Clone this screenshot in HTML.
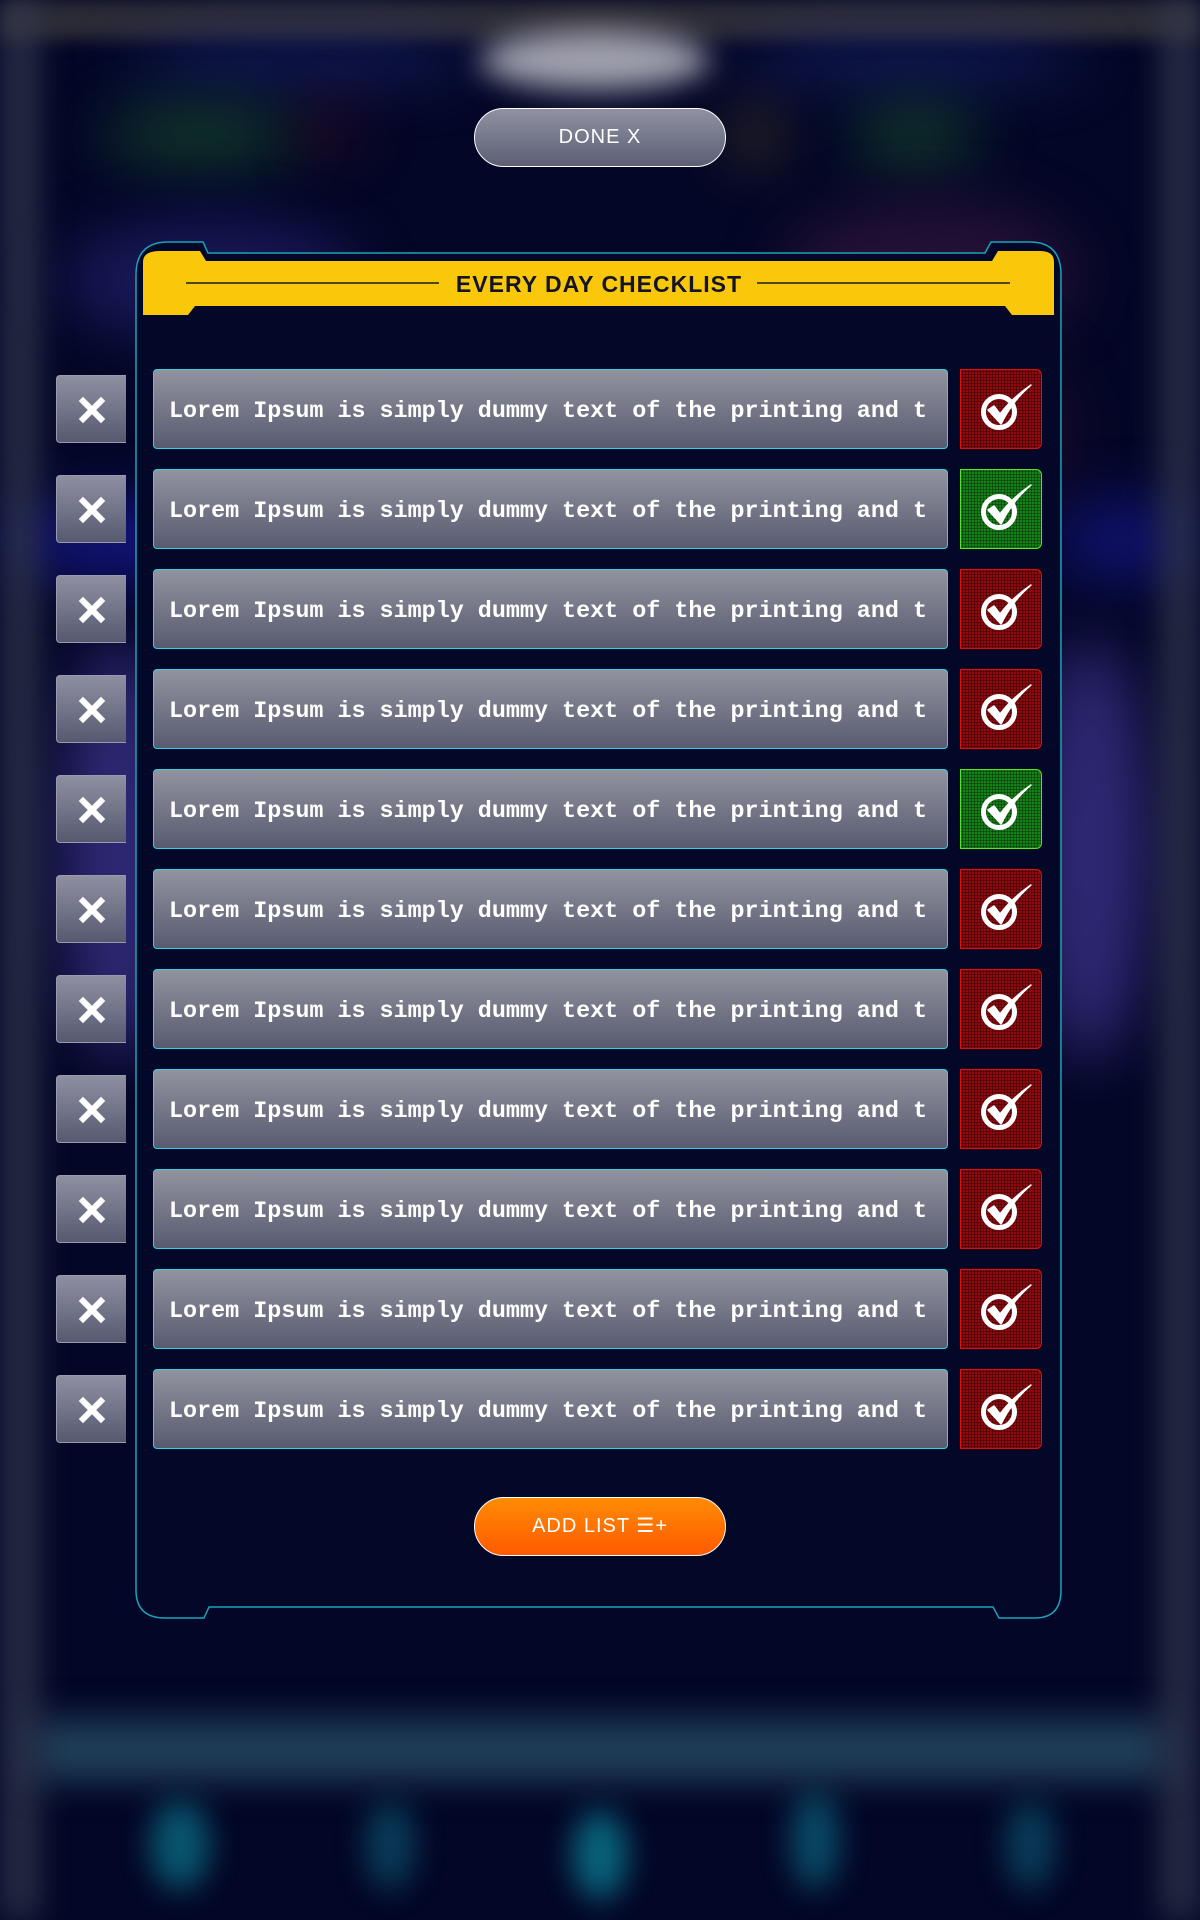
<!DOCTYPE html>
<html><head><meta charset="utf-8"><style>
*{margin:0;padding:0;box-sizing:border-box}
body{width:1200px;height:1920px;overflow:hidden;background:#030626;position:relative;font-family:"Liberation Mono",monospace}
.blob{position:absolute;border-radius:50%;filter:blur(30px)}
.row{position:absolute;left:0;width:1200px;height:80px}
.x{position:absolute;left:56px;top:6px;width:70px;height:68px;border-radius:4px 0 0 4px;background:linear-gradient(#8f8fa2,#565a70);border:1px solid #9a9aae;border-right:none}
.t{position:absolute;left:153px;top:0;width:795px;height:80px;border:1.5px solid #2fd3e6;border-radius:4px;background:linear-gradient(#92939f,#585b70);color:#fff;font-size:23.4px;font-weight:bold;line-height:85px;padding-left:15px;white-space:nowrap;overflow:hidden}
.c{position:absolute;left:960px;top:0;width:82px;height:80px;border-radius:0 6px 6px 0;border:1.5px solid #e40d0d;background-color:#8d0b0f;background-image:radial-gradient(#3a0003 0.8px,transparent 1px);background-size:3px 3px}
.c.g{border-color:#59e420;background-color:#167f1a;background-image:radial-gradient(#053a05 0.8px,transparent 1px)}
.c svg{position:absolute;left:-1.5px;top:-1.5px}
.btn{position:absolute;left:474px;width:252px;height:59px;border-radius:30px;border:1.5px solid #fff;color:#fff;text-align:center;font-family:"Liberation Sans Narrow","Liberation Sans",sans-serif;font-size:20px;line-height:56px;letter-spacing:1px}
</style></head><body>
<div style="position:absolute;left:0;top:0;width:1200px;height:40px;background:#2b2a35;filter:blur(8px)"></div>
<div class="blob" style="left:120px;top:40px;width:360px;height:40px;background:#2a3a9a;opacity:.5"></div>
<div class="blob" style="left:730px;top:40px;width:360px;height:40px;background:#2a3a9a;opacity:.5"></div>
<div class="blob" style="left:480px;top:30px;width:230px;height:60px;background:#c8c8d0;opacity:.8;filter:blur(15px)"></div>
<div class="blob" style="left:100px;top:110px;width:200px;height:50px;background:#1f6b2c;opacity:.6"></div>
<div class="blob" style="left:850px;top:110px;width:130px;height:50px;background:#1f6b2c;opacity:.6"></div>
<div class="blob" style="left:730px;top:110px;width:50px;height:50px;background:#8a7020;opacity:.5"></div>
<div class="blob" style="left:300px;top:110px;width:60px;height:40px;background:#6a1020;opacity:.5"></div>
<div class="blob" style="left:60px;top:220px;width:300px;height:120px;background:#27247a;opacity:.6"></div>
<div class="blob" style="left:780px;top:200px;width:300px;height:150px;background:#3a1840;opacity:.6"></div>
<div class="blob" style="left:820px;top:330px;width:250px;height:200px;background:#3a1030;opacity:.5"></div>
<div class="blob" style="left:0px;top:500px;width:300px;height:80px;background:#1a1aa0;opacity:.7"></div>
<div class="blob" style="left:1050px;top:500px;width:150px;height:80px;background:#1a1aa0;opacity:.6"></div>
<div class="blob" style="left:60px;top:640px;width:120px;height:420px;background:#5a4ac0;opacity:.5"></div>
<div class="blob" style="left:1030px;top:640px;width:120px;height:420px;background:#5a4ac0;opacity:.5"></div>
<div style="position:absolute;left:30px;top:1720px;width:1140px;height:60px;background:#21405a;filter:blur(18px)"></div>
<div style="position:absolute;left:0;top:0;width:40px;height:1920px;background:#353b50;filter:blur(15px);opacity:.7"></div>
<div style="position:absolute;left:1160px;top:0;width:40px;height:1920px;background:#353b50;filter:blur(15px);opacity:.7"></div>
<div class="blob" style="left:150px;top:1800px;width:60px;height:90px;background:#0a6a80;opacity:.8;filter:blur(15px)"></div>
<div class="blob" style="left:365px;top:1800px;width:50px;height:90px;background:#0a4a66;opacity:.8;filter:blur(15px)"></div>
<div class="blob" style="left:572px;top:1810px;width:56px;height:90px;background:#0a7a90;opacity:.8;filter:blur(15px)"></div>
<div class="blob" style="left:790px;top:1790px;width:50px;height:100px;background:#0a5a75;opacity:.8;filter:blur(15px)"></div>
<div class="blob" style="left:1005px;top:1800px;width:50px;height:90px;background:#0a4a66;opacity:.8;filter:blur(15px)"></div>

<svg style="position:absolute;left:0;top:0" width="1200" height="1920">
<path d="M136,1590 L136,275 Q136,242 168,242 L203,242 L208,253 L985,253 L991,242 L1030,242 Q1061,242 1061,275 L1061,1590 Q1061,1618 1035,1618 L999,1618 L993,1607 L209,1607 L204,1618 L165,1618 Q136,1618 136,1590 Z" fill="#030828" stroke="#1aa3b8" stroke-width="1.5"/>
<path d="M143,315 L143,262 Q143,251 160,251 L200,251 L206,261 L992,261 L998,251 L1040,251 Q1054,251 1054,262 L1054,315 L1012,315 L1005,306 L195,306 L188,315 Z" fill="#f9c80a"/>
<line x1="186" y1="283" x2="439" y2="283" stroke="#1a1a1a" stroke-width="1.5"/>
<line x1="757" y1="283" x2="1010" y2="283" stroke="#1a1a1a" stroke-width="1.5"/>
<text x="599" y="292" text-anchor="middle" font-family="Liberation Sans Narrow, Liberation Sans, sans-serif" font-size="23" font-weight="bold" fill="#141426" letter-spacing="1">EVERY DAY CHECKLIST</text>
</svg>

<div class="btn" style="top:108px;background:linear-gradient(#9092a2,#5c5f74)">DONE X</div>
<div class="btn" style="top:1497px;background:linear-gradient(#ff8c05,#ff5a00)">ADD LIST ☰+</div>

<div id="rows"></div>
<script>
var h='';var green=[1,4];
var ck='<svg width="82" height="80" viewBox="0 0 82 80"><circle cx="39" cy="43" r="15.5" fill="none" stroke="#fff" stroke-width="5"/><path d="M28,41 L34,37 L40,45 Q52,29 71,16 Q53,31 41,55 Z" fill="#fff" stroke="#fff" stroke-width="1.5" stroke-linejoin="round"/></svg>';
var xs='<svg width="70" height="68" viewBox="0 0 70 68"><path d="M26,25 L44,43 M44,25 L26,43" stroke="#fff" stroke-width="6" stroke-linecap="square"/></svg>';
for(var i=0;i<11;i++){h+='<div class="row" style="top:'+(369+i*100)+'px"><div class="x">'+xs+'</div><div class="t">Lorem Ipsum is simply dummy text of the printing and t</div><div class="c'+(green.indexOf(i)>=0?' g':'')+'">'+ck+'</div></div>';}
document.getElementById('rows').innerHTML=h;
</script>
</body></html>
